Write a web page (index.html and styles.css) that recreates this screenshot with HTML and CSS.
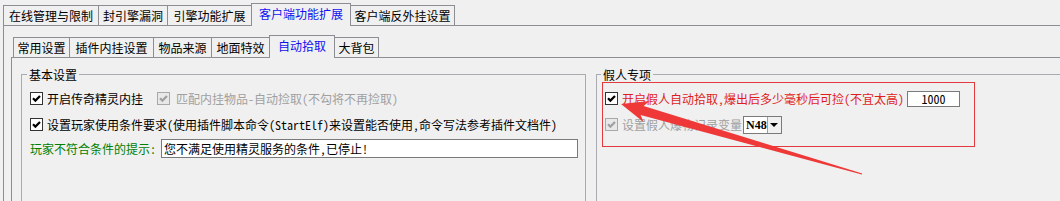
FILE: index.html
```html
<!DOCTYPE html>
<html lang="zh-CN">
<head>
<meta charset="utf-8">
<title>客户端功能扩展</title>
<link rel="stylesheet" href="styles.css">
</head>
<body>
<div class="screen">
  <div class="tabs tabs-outer">
    <div class="tab">在线管理与限制</div>
    <div class="tab">封引擎漏洞</div>
    <div class="tab">引擎功能扩展</div>
    <div class="tab active">客户端功能扩展</div>
    <div class="tab">客户端反外挂设置</div>
  </div>
  <div class="panel panel-outer">
    <div class="tabs tabs-inner">
      <div class="tab">常用设置</div>
      <div class="tab">插件内挂设置</div>
      <div class="tab">物品来源</div>
      <div class="tab">地面特效</div>
      <div class="tab active">自动拾取</div>
      <div class="tab">大背包</div>
    </div>
    <div class="panel panel-inner">
      <fieldset class="group group-basic">
        <legend>基本设置</legend>
        <div class="row">
          <label class="check">
            <svg class="cb" viewBox="0 0 13 13" width="13" height="13"><rect x="0.5" y="0.5" width="12" height="12"/><path d="M3 6.2 L5.4 8.6 L10 4"/></svg>
            <span>开启传奇精灵内挂</span>
          </label>
          <label class="check disabled check-second">
            <svg class="cb" viewBox="0 0 13 13" width="13" height="13"><rect x="0.5" y="0.5" width="12" height="12"/><path d="M3 6.2 L5.4 8.6 L10 4"/></svg>
            <span>匹配内挂物品-自动捡取(不勾将不再捡取)</span>
          </label>
        </div>
        <div class="row">
          <label class="check">
            <svg class="cb" viewBox="0 0 13 13" width="13" height="13"><rect x="0.5" y="0.5" width="12" height="12"/><path d="M3 6.2 L5.4 8.6 L10 4"/></svg>
            <span>设置玩家使用条件要求(使用插件脚本命令(StartElf)来设置能否使用,命令写法参考插件文档件)</span>
          </label>
        </div>
        <div class="row row-input">
          <span class="hint">玩家不符合条件的提示:</span>
          <div class="textbox">您不满足使用精灵服务的条件,已停止!</div>
        </div>
      </fieldset>
      <fieldset class="group group-bot">
        <legend>假人专项</legend>
        <div class="row">
          <label class="check warn">
            <svg class="cb" viewBox="0 0 13 13" width="13" height="13"><rect x="0.5" y="0.5" width="12" height="12"/><path d="M3 6.2 L5.4 8.6 L10 4"/></svg>
            <span>开启假人自动拾取,爆出后多少毫秒后可捡(不宜太高)</span>
          </label>
          <div class="numbox">1000</div>
        </div>
        <div class="row">
          <label class="check disabled">
            <svg class="cb" viewBox="0 0 13 13" width="13" height="13"><rect x="0.5" y="0.5" width="12" height="12"/><path d="M3 6.2 L5.4 8.6 L10 4"/></svg>
            <span>设置假人爆物记录变量</span>
          </label>
          <div class="combo"><span class="combo-value">N48</span><span class="combo-btn"><span class="tri"></span></span></div>
        </div>
      </fieldset>
    </div>
  </div>
  <div class="annot-box"></div>
  <svg class="annot-arrow" width="1060" height="201" viewBox="0 0 1060 201">
    <polygon points="621,104 649.5,101 643.6,106 862.2,173.4 861.8,174.6 640.6,115 643.5,122"/>
  </svg>
</div>
</body>
</html>
```
FILE: styles.css
```css
html, body {
  margin: 0;
  padding: 0;
  background: #f0f0f0;
}

.screen {
  position: relative;
  width: 1060px;
  height: 201px;
  overflow: hidden;
  background: #f0f0f0;
  color: #000;
  font-family: "Noto Sans Mono CJK SC", "Noto Sans CJK SC", sans-serif;
  font-size: 12px;
  line-height: 13px;
}

/* ---------- tabs ---------- */
.tabs {
  display: flex;
  align-items: flex-end;
}

.tabs-outer {
  height: 25px;
  margin-left: 3px;
}

.tabs-inner {
  height: 31px;
  margin-left: 9px;
}

.tab {
  box-sizing: border-box;
  flex-shrink: 0;
  height: 20px;
  padding: 0;
  border: 1px solid #8c8e94;
  border-bottom: 0;
  line-height: 19px;
  text-align: center;
  white-space: nowrap;
  background: #f0f0f0;
}

.tab + .tab {
  margin-left: -1px;
}

.tab.active {
  position: relative;
  z-index: 1;
  height: 23px;
  margin-bottom: -1px;
  padding-bottom: 3px;
  color: #1010f0;
  background: #f0f0f0;
}

.tabs-outer .tab:nth-child(1) { width: 96px; }
.tabs-outer .tab:nth-child(2) { width: 70px; }
.tabs-outer .tab:nth-child(3) { width: 85px; }
.tabs-outer .tab:nth-child(4) { width: 100px; }
.tabs-outer .tab:nth-child(5) { width: 105px; }

.tabs-inner .tab:nth-child(1) { width: 57px; }
.tabs-inner .tab:nth-child(2) { width: 85px; }
.tabs-inner .tab:nth-child(3) { width: 59px; }
.tabs-inner .tab:nth-child(4) { width: 59px; }
.tabs-inner .tab:nth-child(5) { width: 66px; }
.tabs-inner .tab:nth-child(6) { width: 45px; }

/* ---------- panels ---------- */
.panel {
  border: 1px solid #8c8e94;
  border-right: 0;
}

.panel-outer {
  margin-left: 3px;
  height: 200px;
}

.panel-inner {
  display: flex;
  margin-left: 7px;
  height: 200px;
  padding: 10px 0 0 9px;
}

/* ---------- group boxes ---------- */
.group {
  box-sizing: border-box;
  flex-shrink: 0;
  margin: 0;
  min-width: 0;
  height: 200px;
  padding: 7px 0 0 8px;
  border: 1px solid #a9abb0;
}

.group legend {
  margin-left: -3px;
  padding: 0 2px;
  line-height: 13px;
}

.group-basic {
  width: 565px;
  margin-right: 10px;
}

.group-bot {
  width: 480px;
  border-right: 0;
}

.group-bot legend {
  margin-left: -4px;
}

/* ---------- rows ---------- */
.row {
  display: flex;
  align-items: center;
  height: 21px;
  white-space: nowrap;
}

.row + .row {
  margin-top: 5px;
}

.row.row-input {
  margin-top: 3px;
}

.check {
  display: flex;
  align-items: center;
  gap: 4px;
}

.check-second {
  margin-left: 14px;
  gap: 6px;
}

.cb {
  display: block;
  flex-shrink: 0;
}

.cb rect {
  fill: #ffffff;
  stroke: #333333;
}

.cb path {
  fill: none;
  stroke: #000000;
  stroke-width: 2.2;
}

.check.disabled {
  color: #a0a0a0;
}

.check.disabled .cb rect {
  fill: #e8e8e8;
  stroke: #a8a8a8;
}

.check.disabled .cb path {
  stroke: #a0a0a0;
}

.check.warn {
  color: #e01c1c;
}

.hint {
  color: #008000;
}

.textbox {
  box-sizing: border-box;
  width: 417px;
  height: 19px;
  margin-left: 5px;
  padding-left: 2px;
  border: 1px solid #7a7a7a;
  background: #ffffff;
  line-height: 17px;
}

.numbox {
  box-sizing: border-box;
  width: 53px;
  height: 16px;
  margin-left: 3px;
  border: 1px solid #7a7a7a;
  background: #ffffff;
  line-height: 14px;
  text-align: center;
}

.combo {
  display: flex;
  box-sizing: border-box;
  width: 39px;
  height: 18px;
  margin-left: 1px;
  border: 1px solid #7a7a7a;
  background: #ffffff;
}

.combo-value {
  flex: 1;
  padding-left: 2px;
  font-family: "Liberation Serif", serif;
  font-weight: bold;
  font-size: 12px;
  line-height: 16px;
}

.combo-btn {
  display: flex;
  align-items: center;
  justify-content: center;
  width: 15px;
  border-left: 1px solid #a0a0a0;
  background: #f0f0f0;
}

.tri {
  width: 0;
  height: 0;
  border-left: 4px solid transparent;
  border-right: 4px solid transparent;
  border-top: 4px solid #000;
}

/* ---------- annotation overlay ---------- */
.annot-box {
  position: absolute;
  left: 602px;
  top: 82px;
  box-sizing: border-box;
  width: 373px;
  height: 65px;
  border: 1px solid #e23a3e;
  pointer-events: none;
}

.annot-arrow {
  position: absolute;
  left: 0;
  top: 0;
  pointer-events: none;
}

.annot-arrow polygon {
  fill: #ef3838;
}
```
